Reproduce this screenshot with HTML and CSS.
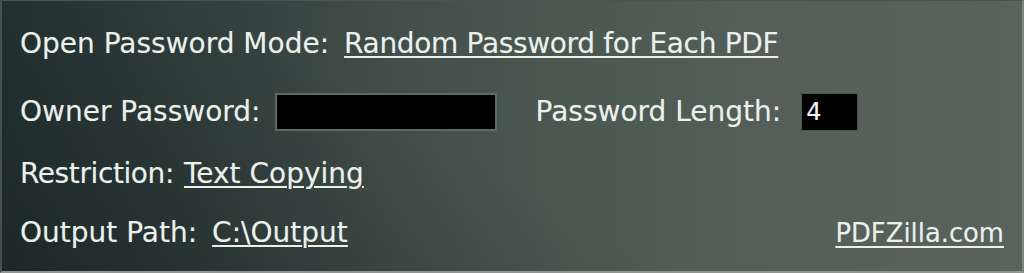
FILE: index.html
```html
<!DOCTYPE html>
<html lang="en">
<head>
<meta charset="utf-8">
<title>PDFZilla Settings</title>
<link rel="stylesheet" href="styles.css">
</head>
<body>
<div class="panel">
  <div class="row row-mode">
    <span class="label">Open Password Mode:</span>
    <a class="link link-mode" href="#">Random Password for Each PDF</a>
  </div>
  <div class="row row-owner">
    <span class="label">Owner Password:</span>
    <span class="field field-owner"></span>
    <span class="label label-length">Password Length:</span>
    <span class="field field-length">4</span>
  </div>
  <div class="row row-restrict">
    <span class="label label-restrict">Restriction:</span>
    <a class="link" href="#">Text Copying</a>
  </div>
  <div class="row row-output">
    <span class="label">Output Path:</span>
    <a class="link" href="#">C:\Output</a>
    <a class="link site" href="#">PDFZilla.com</a>
  </div>
</div>
</body>
</html>
```

FILE: styles.css
```css
html, body {
  margin: 0;
  padding: 0;
  width: 1024px;
  height: 273px;
  overflow: hidden;
  background: #2a3636;
}

.panel {
  box-sizing: border-box;
  width: 1024px;
  height: 273px;
  border-top: 1px solid #4a5553;
  border-left: 2px solid #46504f;
  border-right: 2px solid #7b847f;
  border-bottom: 2px solid #8e9691;
  background:
    linear-gradient(30deg, rgba(10, 18, 18, 0.35) 0%, rgba(10, 18, 18, 0) 45%),
    linear-gradient(to right, #263434 0%, #303e3c 18%, #3f4c48 36%, #4b5852 55%, #535f58 75%, #57635c 100%);
  padding: 27px 18px 0 18px;
  display: flex;
  flex-direction: column;
  font-family: "DejaVu Sans", Verdana, sans-serif;
  font-size: 28px;
  line-height: 32px;
  color: #ebf0eb;
  text-shadow: 0 0 1px rgba(255, 255, 255, 0.25);
}

.row {
  display: flex;
  align-items: center;
  height: 32px;
  white-space: nowrap;
}

.row-mode {
  gap: 15px;
}

.row-owner {
  height: 38px;
  margin-top: 33px;
  gap: 14px;
}

.row-restrict {
  margin-top: 27px;
  gap: 10px;
}

.label-restrict {
  letter-spacing: -0.4px;
}

.row-output {
  margin-top: 27px;
  gap: 15px;
}

.link {
  color: #ebf0eb;
  text-decoration: underline;
  text-decoration-thickness: 2px;
  text-underline-offset: 3px;
}

.link-mode {
  letter-spacing: -0.33px;
}

.row-output .site {
  margin-left: auto;
  font-size: 25.8px;
  text-underline-offset: 4px;
}

.field {
  box-sizing: border-box;
  background: #000;
  height: 38px;
  display: inline-block;
}

.field-owner {
  width: 222px;
  border: 2px solid #5d6b66;
}

.label-length {
  margin-left: 25px;
}

.field-length {
  width: 57px;
  margin-left: 6px;
  border: 1px solid #4a5550;
  font-size: 24px;
  line-height: 36px;
  padding-left: 4px;
  color: #f4f6f4;
}
```
